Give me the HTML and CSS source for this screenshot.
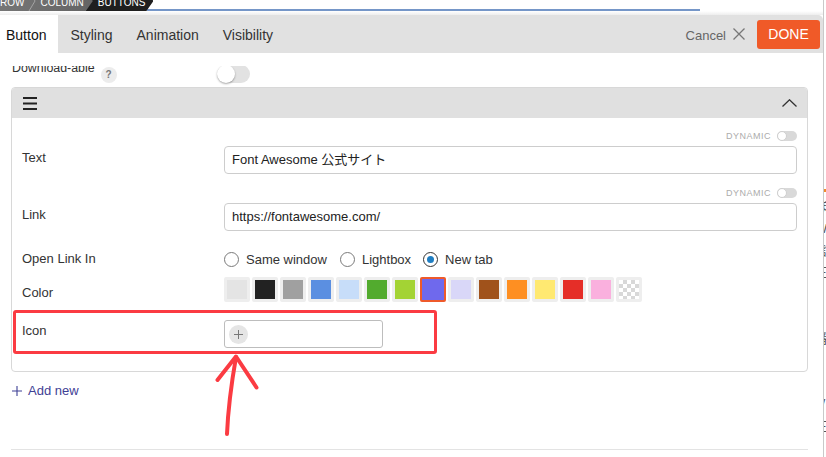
FILE: index.html
```html
<!DOCTYPE html>
<html lang="ja">
<head>
<meta charset="utf-8">
<title>Button settings</title>
<link rel="stylesheet" href="styles.css">
</head>
<body>
<div class="page">
  <div class="panel">
    <div class="topstrip">
      <nav class="crumbs">
        <span class="crumb-gray">
          <span class="crumb">ROW</span>
          <svg class="sep" width="10" height="20" viewBox="0 0 10 20"><polyline points="2,0 8,10 2,20" fill="none" stroke="#a3a3a3" stroke-width="1"/></svg>
          <span class="crumb col">COLUMN</span>
        </span>
        <span class="crumb current">BUTTONS</span>
      </nav>
      <div class="progress"></div>
    </div>

    <div class="tabbar">
      <div class="tabs">
        <span class="tab active">Button</span>
        <span class="tab">Styling</span>
        <span class="tab">Animation</span>
        <span class="tab">Visibility</span>
      </div>
      <div class="actions">
        <span class="cancel">Cancel</span>
        <svg class="x-icon" width="12" height="12" viewBox="0 0 12 12"><path d="M0.5 0.5 L11.5 11.5 M11.5 0.5 L0.5 11.5" stroke="#777" stroke-width="1.3" fill="none"/></svg>
        <button class="done">DONE</button>
      </div>
    </div>
    <div class="head-gap"></div>

    <div class="content">
      <div class="dl-row">
        <span class="dl-label">Download-able</span>
        <span class="info">?</span>
        <span class="big-toggle"><span class="knob"></span></span>
      </div>

      <div class="accordion">
        <div class="acc-head">
          <svg class="burger" width="14" height="13" viewBox="0 0 14 13"><rect x="0" y="0" width="14" height="2" fill="#222"/><rect x="0" y="5.5" width="14" height="2" fill="#222"/><rect x="0" y="11" width="14" height="2" fill="#222"/></svg>
          <svg class="chev" width="15" height="8" viewBox="0 0 15 8"><polyline points="0.5,7.5 7.5,0.8 14.5,7.5" fill="none" stroke="#333" stroke-width="1.3"/></svg>
        </div>
        <div class="acc-body">
          <div class="dyn"><span>DYNAMIC</span><span class="switch"><span class="sknob"></span></span></div>
          <div class="field">
            <label class="lbl pad4">Text</label>
            <div class="input">Font Awesome 公式サイト</div>
          </div>

          <div class="dyn second"><span>DYNAMIC</span><span class="switch"><span class="sknob"></span></span></div>
          <div class="field">
            <label class="lbl pad4">Link</label>
            <div class="input">https://fontawesome.com/</div>
          </div>

          <div class="field radio-row">
            <label class="lbl up1">Open Link In</label>
            <div class="radios">
              <span class="radio"><span class="circle"></span><span class="rtext">Same window</span></span>
              <span class="radio r2"><span class="circle"></span><span class="rtext">Lightbox</span></span>
              <span class="radio r3"><span class="circle checked"><span class="dot"></span></span><span class="rtext">New tab</span></span>
            </div>
          </div>

          <div class="field color-row">
            <label class="lbl pad8">Color</label>
            <div class="swatches">
              <span class="sw c1"></span>
              <span class="sw c2"></span>
              <span class="sw c3"></span>
              <span class="sw c4"></span>
              <span class="sw c5"></span>
              <span class="sw c6"></span>
              <span class="sw c7"></span>
              <span class="sw c8 selected"></span>
              <span class="sw c9"></span>
              <span class="sw c10"></span>
              <span class="sw c11"></span>
              <span class="sw c12"></span>
              <span class="sw c13"></span>
              <span class="sw c14"></span>
              <span class="sw c15"></span>
            </div>
          </div>

          <div class="field icon-row">
            <label class="lbl pad3">Icon</label>
            <div class="icon-input">
              <span class="plus-circle"><svg width="9" height="9" viewBox="0 0 9 9"><path d="M4.5 0 V9 M0 4.5 H9" stroke="#777" stroke-width="1"/></svg></span>
            </div>
          </div>
        </div>
      </div>

      <div class="addnew">
        <svg width="10" height="10" viewBox="0 0 10 10"><path d="M5 0 V10 M0 5 H10" stroke="#3f4195" stroke-width="1.1"/></svg>
        <span>Add new</span>
      </div>
      <div class="rule"></div>
    </div>
  </div>

  <div class="outside">
    <div class="orange"></div>
    <div class="bgtext">ぼ<br>W<br>言<br>三<br>A<br><br>番<br>I<br><br>Ⅴ<br>三</div>
  </div>
</div>

<svg class="annotation" width="826" height="457" viewBox="0 0 826 457">
  <rect x="14.5" y="311.5" width="421" height="41" rx="1.5" fill="none" stroke="#fb3b42" stroke-width="3"/>
  <path d="M227 434 C228 410 232 380 236 357" fill="none" stroke="#fb3b42" stroke-width="4" stroke-linecap="round"/>
  <path d="M217.5 380 L236 356.5 L256.5 387.5" fill="none" stroke="#fb3b42" stroke-width="4" stroke-linecap="round" stroke-linejoin="round"/>
</svg>
</body>
</html>
```

FILE: styles.css
```css
* {
  box-sizing: border-box;
  margin: 0;
  padding: 0;
}

html, body {
  width: 826px;
  height: 457px;
  overflow: hidden;
  background: #fff;
}

body {
  font-family: "Liberation Sans", "Noto Sans CJK JP", Arial, sans-serif;
  color: #333;
  position: relative;
}

.page {
  display: flex;
  height: 457px;
}

.panel {
  width: 824px;
  flex: none;
  border-right: 1px solid #c9c9c9;
  display: flex;
  flex-direction: column;
  height: 457px;
}

/* top strip / breadcrumbs */
.topstrip {
  height: 15px;
  flex: none;
  display: flex;
  align-items: flex-start;
  background: linear-gradient(#fff 0, #fff 11px, #ededed 15px);
}

.crumbs {
  display: flex;
  height: 20px;
  margin-top: -9px;
  flex: none;
}

.crumb-gray {
  display: flex;
  background: linear-gradient(to right, #767676, #646464);
  height: 20px;
}

.crumb {
  font-size: 10px;
  line-height: 16px;
  padding-top: 4px;
  height: 20px;
  color: #fff;
  white-space: nowrap;
}

.sep {
  margin: 0 3px;
  flex: none;
}

.crumb.col {
  padding-right: 9px;
}

.crumb.current {
  background: #1f1f1f;
  margin-left: -7px;
  padding-left: 12px;
  padding-right: 8px;
  clip-path: polygon(0 0, calc(100% - 7px) 0, 100% 50%, calc(100% - 7px) 100%, 0 100%, 7px 50%);
}

.progress {
  margin-top: 9px;
  margin-left: -6px;
  width: 553px;
  height: 2px;
  background: #7596c8;
}

/* tab bar */
.tabbar {
  height: 38px;
  flex: none;
  display: flex;
  justify-content: space-between;
  background: #e1e1e1;
  border-top-right-radius: 5px;
  padding-right: 3px;
}

.tabs {
  display: flex;
}

.tab {
  font-size: 14px;
  height: 38px;
  line-height: 36px;
  padding: 2px 12px 0;
  color: #333;
}

.tab.active {
  background: #fff;
  color: #111;
  padding-left: 6px;
}

.actions {
  display: flex;
  align-items: center;
}

.cancel {
  font-size: 13px;
  color: #666;
  padding-top: 2px;
}

.x-icon {
  margin-left: 7px;
}

.done {
  margin-left: 12px;
  width: 63px;
  height: 29px;
  border: none;
  border-radius: 3px;
  background: #f05a28;
  color: #fff;
  font-family: inherit;
  font-size: 14px;
}

.head-gap {
  height: 13px;
  flex: none;
  background: #fff;
}

/* content */
.content {
  flex: 1;
  overflow: hidden;
  padding: 0 15px 0 11px;
}

.dl-row {
  display: flex;
  align-items: flex-start;
  height: 24px;
  margin-top: -5px;
}

.dl-label {
  font-size: 12.4px;
  line-height: 16px;
  margin-top: -1.2px;
  margin-left: 1px;
  color: #333;
}

.info {
  width: 16px;
  height: 16px;
  margin-left: 6px;
  margin-top: 6px;
  border-radius: 50%;
  background: #ececec;
  color: #777;
  font-size: 10px;
  font-weight: bold;
  line-height: 16px;
  text-align: center;
}

.big-toggle {
  position: relative;
  width: 33px;
  height: 18px;
  margin-left: 100px;
  margin-top: 4px;
  border-radius: 9px;
  background: #e2e2e2;
}

.knob {
  position: absolute;
  left: 0;
  top: 0;
  width: 18px;
  height: 18px;
  border-radius: 50%;
  background: #fff;
  box-shadow: 0 1px 2px rgba(0, 0, 0, 0.35);
}

/* accordion */
.accordion {
  margin-top: 2px;
  border: 1px solid #d8d8d8;
  border-radius: 4px;
  overflow: hidden;
}

.acc-head {
  height: 30px;
  background: #e0e0e0;
  display: flex;
  align-items: center;
  justify-content: space-between;
  padding: 0 10px 0 11px;
}

.acc-body {
  padding: 13px 10px 23px 10px;
}

.dyn {
  display: flex;
  justify-content: flex-end;
  align-items: center;
  height: 10px;
  font-size: 9px;
  letter-spacing: 0.5px;
  color: #acacac;
}

.dyn.second {
  margin-top: 14px;
}

.switch {
  position: relative;
  width: 20px;
  height: 10px;
  margin-left: 6px;
  border-radius: 5px;
  background: #d9d9d9;
}

.sknob {
  position: absolute;
  left: 0;
  top: 0;
  width: 10px;
  height: 10px;
  border-radius: 50%;
  background: #fff;
  border: 1px solid #cfcfcf;
}

.field {
  display: grid;
  grid-template-columns: 202px 1fr;
  align-items: start;
  margin-top: 5px;
}

.lbl {
  font-size: 13px;
  line-height: 16px;
  color: #333;
}

.pad4 { padding-top: 4px; }
.pad3 { padding-top: 3px; }
.pad8 { padding-top: 8px; }
.up1 { margin-top: -1px; }

.input {
  height: 28px;
  border: 1px solid #cdcdcd;
  border-radius: 4px;
  padding-left: 7px;
  font-size: 13px;
  line-height: 26px;
  color: #222;
}

.radio-row {
  margin-top: 21px;
}

.radios {
  display: flex;
  align-items: center;
  height: 15px;
}

.radio {
  display: flex;
  align-items: center;
}

.radio.r2 { margin-left: 13px; }
.radio.r3 { margin-left: 12px; }

.circle {
  width: 15px;
  height: 15px;
  border-radius: 50%;
  border: 1px solid #7a7a7a;
  background: #fff;
  display: flex;
  align-items: center;
  justify-content: center;
}

.circle.checked {
  border: 1.5px solid #333;
}

.dot {
  width: 7px;
  height: 7px;
  border-radius: 50%;
  background: #1f7ec2;
}

.rtext {
  margin-left: 7px;
  font-size: 13px;
  line-height: 15px;
  color: #333;
}

.color-row {
  margin-top: 10px;
}

.swatches {
  display: flex;
  gap: 2px;
}

.sw {
  width: 26px;
  height: 25px;
  border: 3px solid #eeeeee;
  border-radius: 2px;
}

.sw.selected {
  border: 2px solid #ee5a2b;
}

.c1 { background: #e4e4e4; }
.c2 { background: #222222; }
.c3 { background: #a0a0a0; }
.c4 { background: #5b8fe1; }
.c5 { background: #c7ddf9; }
.c6 { background: #52ab2e; }
.c7 { background: #a3d334; }
.c8 { background: #6f69ed; }
.c9 { background: #d9d7f8; }
.c10 { background: #a0521b; }
.c11 { background: #fe8f22; }
.c12 { background: #ffe971; }
.c13 { background: #e52e28; }
.c14 { background: #fab0de; }
.c15 {
  background-color: #fff;
  background-image:
    linear-gradient(45deg, #d8d8d8 25%, transparent 25%, transparent 75%, #d8d8d8 75%),
    linear-gradient(45deg, #d8d8d8 25%, transparent 25%, transparent 75%, #d8d8d8 75%);
  background-size: 8px 8px;
  background-position: 0 0, 4px 4px;
}

.icon-row {
  margin-top: 18px;
}

.icon-input {
  width: 159px;
  height: 28px;
  border: 1px solid #bdbdbd;
  border-radius: 3px;
  display: flex;
  align-items: center;
  padding-left: 4px;
}

.plus-circle {
  width: 19px;
  height: 19px;
  border-radius: 50%;
  background: #e5e5e5;
  display: flex;
  align-items: center;
  justify-content: center;
}

/* add new */
.addnew {
  display: flex;
  align-items: center;
  margin-top: 11px;
  margin-left: 1px;
  height: 16px;
  color: #3f4195;
  font-size: 13px;
}

.addnew span {
  margin-left: 6px;
  line-height: 16px;
}

.rule {
  margin-top: 50px;
  height: 1px;
  background: #e3e3e3;
}

/* outside page sliver */
.outside {
  flex: 1;
  overflow: hidden;
  position: relative;
}

.orange {
  margin-top: 189px;
  height: 3px;
  background: #f08a2c;
}

.bgtext {
  margin-left: -9px;
  margin-top: 4px;
  font-size: 13px;
  line-height: 22px;
  color: #555;
  white-space: nowrap;
}

/* red annotation overlay */
.annotation {
  position: absolute;
  left: 0;
  top: 0;
  pointer-events: none;
}
```
